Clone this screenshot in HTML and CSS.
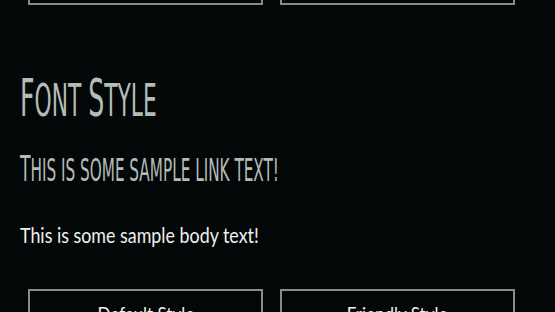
FILE: index.html
```html
<!DOCTYPE html>
<html>
<head>
  <meta charset="UTF-8">
  <meta name="viewport" content="width=device-width, initial-scale=1.0">
  <title>Font Style</title>
  <link rel="stylesheet" href="styles.css">
</head>
<body>
  <div class="button-row top-row">
    <button class="style-btn" aria-label="Serif Style"></button>
    <button class="style-btn" aria-label="Modern Style"></button>
  </div>

  <section class="sample">
    <h1><span class="squeeze"><span class="cap">F</span>ont <span class="cap">S</span>tyle</span></h1>
    <h2><span class="squeeze"><span class="cap">T</span>his is some sample link text!</span></h2>
    <p><span class="narrow">This is some sample body text!</span></p>
  </section>

  <div class="button-row">
    <button class="style-btn"><span class="narrow">Default Style</span></button>
    <button class="style-btn"><span class="narrow">Friendly Style</span></button>
  </div>
</body>
</html>
```

FILE: styles.css
```css
body {
  margin: 0;
  background: #030707;
  color: #f0f0f0;
  font-family: Lato, 'Open Sans', sans-serif;
  overflow: hidden;
  height: 312px;
}
.narrow {
  display: inline-block;
  transform: scaleX(0.85);
  transform-origin: left center;
}
.button-row {
  display: flex;
  gap: 17px;
  padding-left: 28px;
}
.top-row {
  margin-top: -40px;
}
.style-btn {
  width: 235px;
  height: 45px;
  background: transparent;
  border: 2px solid #8a8c8c;
  color: #f0f0f0;
  font-family: Lato, 'Open Sans', sans-serif;
  font-size: 20px;
  padding: 3px 0 0;
  text-align: center;
  vertical-align: top;
}
.style-btn .narrow {
  transform-origin: center center;
}
.sample {
  padding: 0 20px;
  height: 284px;
}
h1, h2 {
  margin: 0;
  font-family: 'DejaVu Sans Condensed', 'DejaVu Sans', sans-serif;
  font-weight: normal;
  text-transform: uppercase;
  color: #b4bcb8;
  white-space: nowrap;
}
.squeeze {
  display: inline-block;
  transform: scaleX(0.55);
  transform-origin: left center;
}
h1 {
  padding-top: 67px;
  font-size: 44px;
  line-height: 54px;
}
h1 .cap {
  font-size: 51px;
}
h2 {
  margin-top: 21px;
  font-size: 32px;
  line-height: 40px;
}
h2 .squeeze {
  transform: scaleX(0.53);
}
h2 .cap {
  font-size: 36px;
}
p {
  margin: 32px 0 0;
  font-size: 21px;
  line-height: 26px;
}
```
